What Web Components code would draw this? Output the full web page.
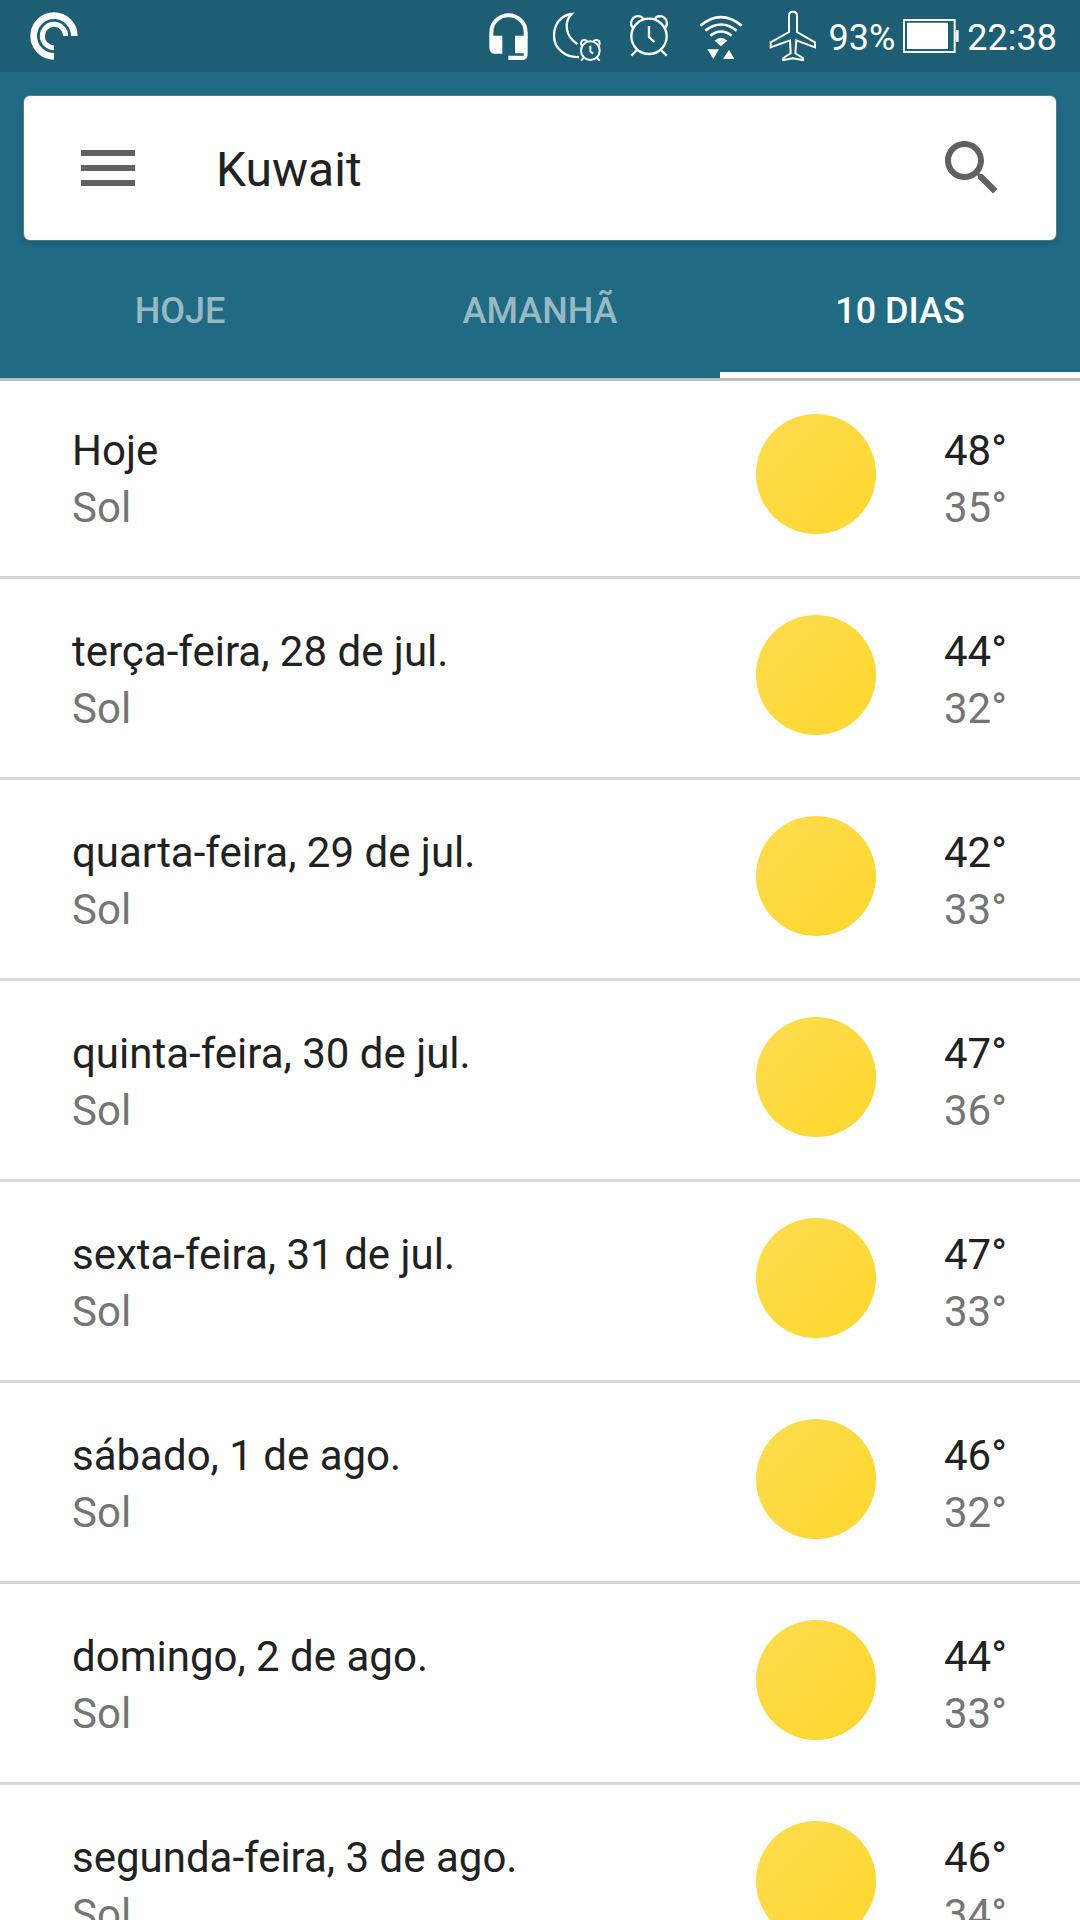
<!DOCTYPE html>
<html lang="pt">
<head>
<meta charset="utf-8">
<meta name="viewport" content="width=device-width, initial-scale=1">
<title>Kuwait – 10 dias</title>
<style>
  html, body { margin: 0; height: 100%; }
  body {
    font-family: Roboto, "Noto Sans", sans-serif;
    color: #212121;
    background: #fff;
  }
</style>
</head>
<body>
<weather-app></weather-app>

<template id="status-bar">
  <style>
    :host { display: flex; align-items: center; height: 72px; box-sizing: border-box; padding: 0 23px 0 18px; background: #1d5e74; color: #fff; font-size: 36px; line-height: 42px; }
    .system { display: flex; align-items: center; margin-left: auto; }
    svg { display: block; width: 72px; height: 72px; fill: none; stroke: #fff; stroke-width: 7; }
    .solid { fill: #fff; stroke: none; }
    span { padding-top: 3px; }
  </style>
  <svg viewBox="54 0 216 216" aria-hidden="true">
    <path stroke-width="20" d="M223 108A61 61 0 1 0 162 169"/>
    <path stroke-width="15" d="M197 108A35 35 0 1 0 162 143"/>
  </svg>
  <div class="system">
    <svg viewBox="-3 0 216 216" aria-hidden="true">
      <path stroke-width="12" d="M64 112V97A51.500 51.500 0 0 1 167 97V112"/>
      <path class="solid" d="M58 107H97V161H76Q58 161 58 143ZM135 107H173V162Q173 180 155 180H115V167H161V160H135Z"/>
    </svg>
    <svg viewBox="213 0 216 216" aria-hidden="true">
      <path d="M327 171C286 174 252 145 252 107C252 71 274 46 305 42C279 68 288 111 322 132"/>
      <g stroke-width="6">
        <circle cx="361" cy="152" r="28"/>
        <path d="M335 136A10 10 0 1 1 351 124M371 124A10 10 0 1 1 387 136M342 173L333 182M380 173L389 182"/>
        <path d="M361 137V154L369 161"/>
      </g>
    </svg>
    <svg viewBox="429 0 216 216" aria-hidden="true">
      <circle cx="537" cy="109" r="53"/>
      <path d="M488 83A20 20 0 1 1 520 56M554 56A20 20 0 1 1 586 83M501 150L484 167M573 150L590 167"/>
      <path d="M537 78V111L553 126"/>
    </svg>
    <svg viewBox="645 0 216 216" aria-hidden="true">
      <path stroke-width="8" d="M691 77Q753 26 815 77M706 92Q753 55 800 92M721 107Q753 82 785 107"/>
      <path class="solid" d="M734 122Q753 104 772 122L753 139ZM712 148H747L730 177ZM759 177H793L777 149Z"/>
    </svg>
    <svg viewBox="-9 0 216 216" aria-hidden="true">
      <path stroke-width="6" d="M87 47Q87 35 98.500 35Q111 35 111 47V96L165 127V142L109 121L106 160L129 174V180L98 175L70 180V174L92 160L90 121L32 142V127L87 96Z"/>
    </svg>
    <span>93%</span>
    <svg viewBox="405 0 216 216" aria-hidden="true">
      <path stroke-width="6" d="M432 60H584V156H432Z"/>
      <path class="solid" d="M441 68H564V147H441ZM587 90H596V126H587Z"/>
    </svg>
    <span>22:38</span>
  </div>
</template>

<template id="search-card">
  <style>
    :host { display: flex; align-items: center; height: 144px; box-sizing: border-box; padding: 0 48px; margin: 0 24px; border-radius: 6px; background: #fff; box-shadow: 0 0 1px 1px rgba(150, 170, 175, .4), 0 3px 6px rgba(0, 0, 0, .18); }
    button { flex: none; width: 72px; height: 72px; padding: 0; border: 0; background: none; }
    svg { display: block; width: 72px; height: 72px; fill: #616161; }
    input { flex: 1; min-width: 0; height: 60px; margin: 0; padding: 2px 0 0 72px; border: 0; outline: 0; box-sizing: border-box; background: none; font: inherit; font-size: 48px; color: #212121; }
  </style>
  <button type="button" aria-label="Menu"><svg viewBox="0 0 24 24"><path d="M3 18h18v-2H3v2zm0-5h18v-2H3v2zm0-7v2h18V6H3z"/></svg></button>
  <input type="text" aria-label="Local" value="Kuwait">
  <button type="button" aria-label="Pesquisar"><svg viewBox="0 0 24 24"><path d="M15.500 14h-.79l-.28-.27C15.410 12.590 16 11.110 16 9.500 16 5.910 13.090 3 9.500 3S3 5.910 3 9.500 5.910 16 9.500 16c1.610 0 3.090-.59 4.230-1.570l.27.28v.79l5 4.990L20.490 19l-4.990-5zm-6 0C7.010 14 5 11.990 5 9.500S7.010 5 9.500 5 14 7.010 14 9.500 11.990 14 9.500 14z"/></svg></button>
</template>

<template id="tab-item">
  <style>
    :host { display: flex; flex: 1; }
    button { flex: 1; height: 138px; padding: 10px 0 0; border: 0; border-bottom: 6px solid transparent; box-sizing: border-box; background: none; color: rgba(255, 255, 255, .54); font: inherit; font-size: 36px; font-weight: 500; line-height: 42px; text-transform: uppercase; }
    :host([selected]) button { color: #fff; border-color: #fff; }
  </style>
  <button type="button"><slot></slot></button>
</template>

<template id="day-row">
  <style>
    :host { display: flex; align-items: flex-start; flex: none; height: 201px; box-sizing: border-box; padding: 0 72px; border-bottom: 3px solid #d6d6d6; font-size: 42px; line-height: 57px; }
    .text, .temps { display: flex; flex-direction: column; padding-top: 44px; }
    .text { flex: 1; min-width: 0; }
    .temps { flex: none; width: 64px; }
    .sun { flex: none; width: 120px; height: 120px; margin: 36px 68px 0 0; border-radius: 50%; background: linear-gradient(135deg, #fddc50, #fdd835 75%); }
    .minor { color: #757575; }
  </style>
  <div class="text"><span><slot></slot></span><span class="minor"><slot name="sky"></slot></span></div>
  <div class="sun" role="img" aria-label="Sol"></div>
  <div class="temps"><span><slot name="high"></slot></span><span class="minor"><slot name="low"></slot></span></div>
</template>

<template id="weather-app">
  <style>
    :host { display: flex; flex-direction: column; height: 100vh; overflow: hidden; }
    header { flex: none; padding-top: 24px; background: #216a83; }
    nav { display: flex; }
    main { flex: 1; min-height: 0; display: flex; flex-direction: column; overflow-y: auto; scrollbar-width: none; box-shadow: inset 0 3px #bdbdbd; }
  </style>
  <status-bar></status-bar>
  <header>
    <search-card></search-card>
    <nav>
      <tab-item>Hoje</tab-item>
      <tab-item>Amanhã</tab-item>
      <tab-item selected>10 dias</tab-item>
    </nav>
  </header>
  <main role="list"></main>
</template>

<script>
  class TemplateElement extends HTMLElement {
    constructor() {
      super();
      const template = document.getElementById(this.localName);
      this.attachShadow({ mode: "open" }).append(template.content.cloneNode(true));
    }
  }

  class StatusBar extends TemplateElement {}
  class SearchCard extends TemplateElement {}
  class TabItem extends TemplateElement {}
  class DayRow extends TemplateElement {}

  const forecast = [
    ["Hoje", 48, 35],
    ["terça-feira, 28 de jul.", 44, 32],
    ["quarta-feira, 29 de jul.", 42, 33],
    ["quinta-feira, 30 de jul.", 47, 36],
    ["sexta-feira, 31 de jul.", 47, 33],
    ["sábado, 1 de ago.", 46, 32],
    ["domingo, 2 de ago.", 44, 33],
    ["segunda-feira, 3 de ago.", 46, 34]
  ];

  class WeatherApp extends TemplateElement {
    connectedCallback() {
      this.shadowRoot.querySelector("main").innerHTML = forecast.map(([day, high, low]) =>
        `<day-row role="listitem">${day}<span slot="sky">Sol</span><span slot="high">${high}°</span><span slot="low">${low}°</span></day-row>`
      ).join("");
    }
  }

  customElements.define("status-bar", StatusBar);
  customElements.define("search-card", SearchCard);
  customElements.define("tab-item", TabItem);
  customElements.define("day-row", DayRow);
  customElements.define("weather-app", WeatherApp);
</script>
</body>
</html>
